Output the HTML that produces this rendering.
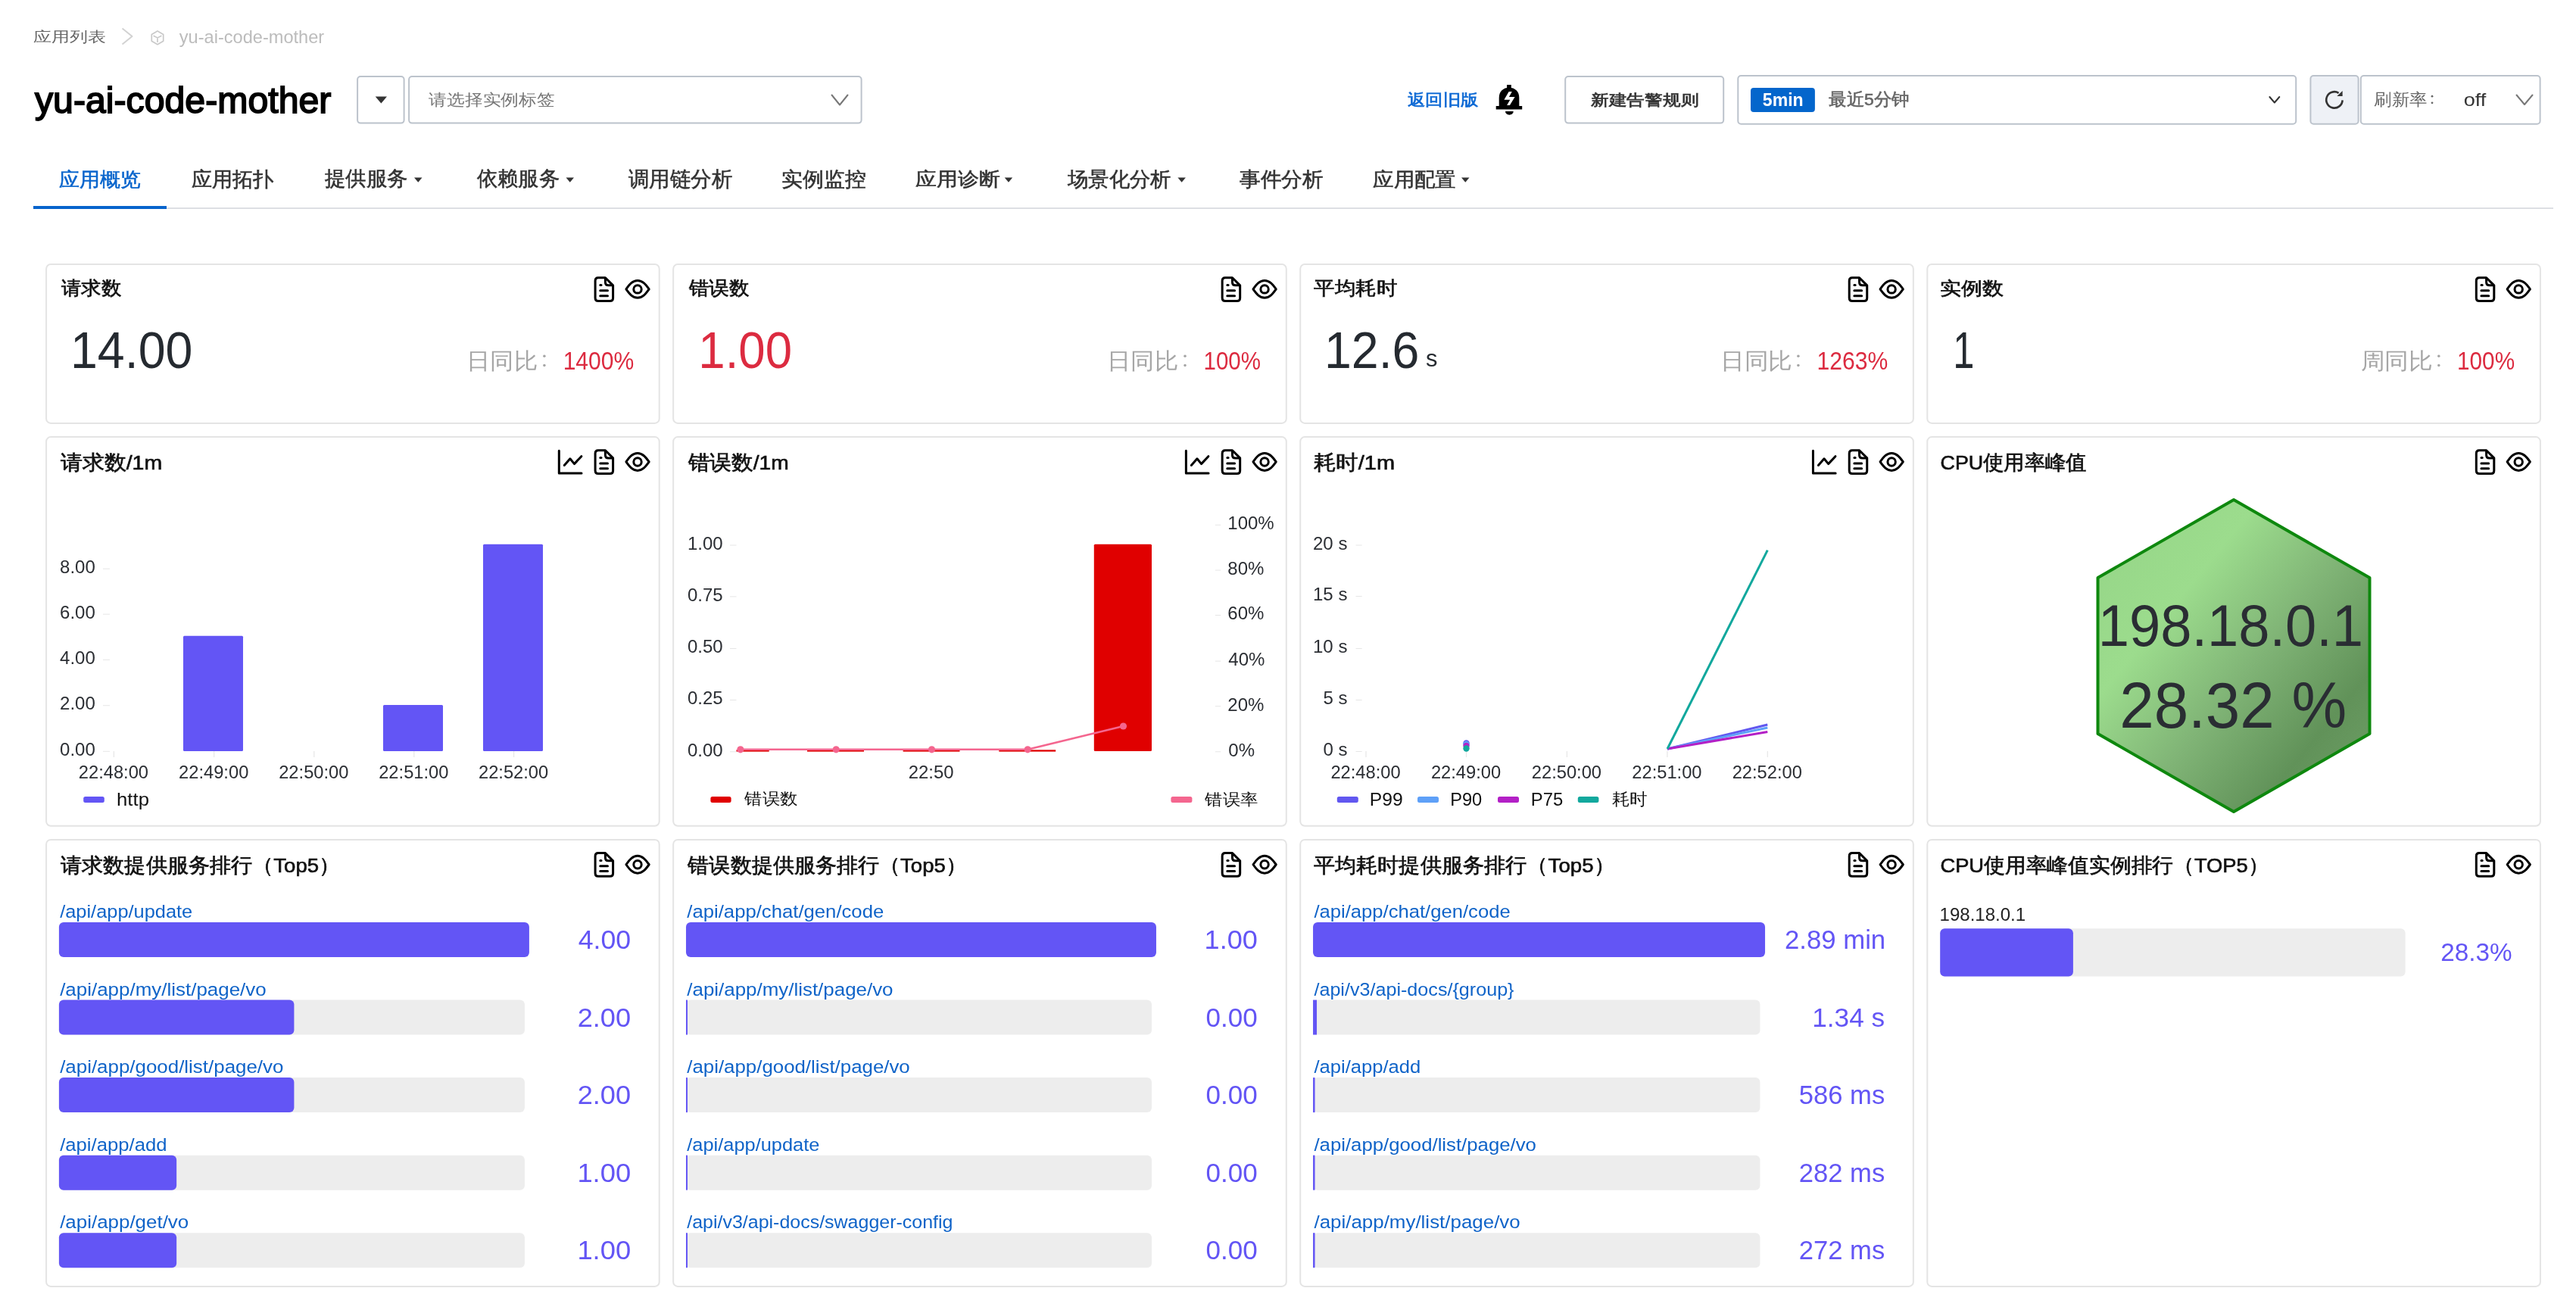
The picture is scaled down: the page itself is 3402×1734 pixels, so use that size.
<!DOCTYPE html><html><head><meta charset="utf-8"><title>yu-ai-code-mother</title><style>html,body{margin:0;padding:0;background:#fff;overflow:hidden}svg{display:block;font-family:"Liberation Sans",sans-serif;will-change:transform}</style></head><body>
<svg width="3402" height="1734" viewBox="0 0 3402 1734">
<defs><linearGradient id="hexg" gradientUnits="userSpaceOnUse" x1="2762" y1="697" x2="3110" y2="983"><stop offset="0" stop-color="#95d587"/><stop offset="0.33" stop-color="#9cdc8d"/><stop offset="0.62" stop-color="#80b476"/><stop offset="0.9" stop-color="#619259"/><stop offset="1" stop-color="#67985f"/></linearGradient></defs>
<text x="44.34" y="54.83" font-size="19.34" fill="#666" textLength="95.83" lengthAdjust="spacingAndGlyphs">应用列表</text>
<path d="M161.5,37.5 L174.5,48 L161.5,58.5" fill="none" stroke="#d2d2d2" stroke-width="2" stroke-linejoin="round"/>
<path d="M208.00,40.95 L215.71,45.40 L215.71,54.30 L208.00,58.75 L200.29,54.30 L200.29,45.40 Z" fill="none" stroke="#c9c9c9" stroke-width="1.7" stroke-linejoin="round"/>
<path d="M203.2,47.4 L208,49.9 L212.8,47.4 M208,49.9 L208,55.2" fill="none" stroke="#c9c9c9" stroke-width="1.7" stroke-linecap="round"/>
<text x="236.80" y="56.70" font-size="24.00" fill="#bcbcbc" textLength="191.40" lengthAdjust="spacingAndGlyphs">yu-ai-code-mother</text>
<text x="45.94" y="148.60" font-size="49.00" fill="#000" textLength="391.51" lengthAdjust="spacingAndGlyphs" stroke="#000" stroke-width="1.8">yu-ai-code-mother</text>
<rect x="472.10" y="101.00" width="61.50" height="61.60" fill="none" rx="4" stroke="#bcc3cc" stroke-width="2"/>
<path d="M495.7,127.6 L511,127.6 L503.35,136.5 Z" fill="#333" />
<rect x="540.10" y="101.00" width="597.50" height="61.60" fill="none" rx="4" stroke="#bcc3cc" stroke-width="2"/>
<text x="566.29" y="138.74" font-size="21.40" fill="#777" textLength="166.40" lengthAdjust="spacingAndGlyphs">请选择实例标签</text>
<path d="M1098.5,125.5 L1109,138.5 L1119.5,125.5" fill="none" stroke="#777" stroke-width="2" stroke-linecap="round" stroke-linejoin="round"/>
<text x="1859.04" y="139.05" font-size="21.32" fill="#0b68d4" textLength="93.62" lengthAdjust="spacingAndGlyphs" stroke="#0b68d4" stroke-width="0.7">返回旧版</text>
<path d="M1990.10,112.00 L1995.80,112.00 L1995.80,116.80 L1990.10,116.80 Z" fill="#000" />
<path d="M1979.70,140.20 L1979.70,129.00 C1979.70,120.50 1985.50,115.80 1993.00,115.80 C2000.50,115.80 2006.30,120.50 2006.30,129.00 L2006.30,140.20 Z" fill="#000" />
<path d="M1975.70,140.00 L2010.20,140.00 L2010.20,144.60 L1975.70,144.60 Z" fill="#000" />
<path d="M1988.00,146.90 A5.35,4.9 0 0 0 1998.70,146.90 Z" fill="#000" />
<path d="M1992.65,120.90 L1996.80,120.90 L1992.90,128.00 L2000.60,128.00 L1993.90,138.90 L1990.10,138.90 L1994.30,131.80 L1986.40,131.80 Z" fill="#fff" />
<rect x="2067.20" y="101.00" width="209.00" height="61.60" fill="none" rx="4" stroke="#bcc3cc" stroke-width="2"/>
<text x="2100.98" y="138.80" font-size="19.84" fill="#333" textLength="142.42" lengthAdjust="spacingAndGlyphs" stroke="#333" stroke-width="0.7">新建告警规则</text>
<rect x="2295.30" y="100.00" width="736.90" height="63.70" fill="none" rx="4" stroke="#bcc3cc" stroke-width="2"/>
<rect x="2312.00" y="115.90" width="84.90" height="32.10" fill="#0466cc" rx="4"/>
<text x="2327.82" y="139.50" font-size="23.50" fill="#fff" font-weight="bold" textLength="53.85" lengthAdjust="spacingAndGlyphs">5min</text>
<text x="2415.06" y="138.59" font-size="22.51" fill="#666" textLength="106.68" lengthAdjust="spacingAndGlyphs" stroke="#666" stroke-width="0.6">最近5分钟</text>
<path d="M2997.4,128 L3003.85,135.5 L3010.3,128" fill="none" stroke="#333" stroke-width="2" stroke-linecap="round" stroke-linejoin="round"/>
<rect x="3051.40" y="100.00" width="63.20" height="63.70" fill="#eef1f6" rx="4" stroke="#bcc3cc" stroke-width="2"/>
<path d="M3093.60,132.40 A10.7,10.7 0 1 1 3088.57,122.83" fill="none" stroke="#333" stroke-width="2.6" />
<path d="M3093.6,120 L3093.6,127 L3086.4,127 Z" fill="#333" />
<rect x="3117.80" y="100.00" width="236.80" height="63.70" fill="none" rx="4" stroke="#bcc3cc" stroke-width="2"/>
<text x="3135.25" y="139.31" font-size="22.25" fill="#666" textLength="70.32" lengthAdjust="spacingAndGlyphs">刷新率</text>
<circle cx="3212.00" cy="127.20" r="1.4" fill="#666"/>
<circle cx="3212.00" cy="135.80" r="1.4" fill="#666"/>
<text x="3253.69" y="139.90" font-size="24.00" fill="#333" textLength="29.60" lengthAdjust="spacingAndGlyphs">off</text>
<path d="M3323.5,125.5 L3334,138 L3344.5,125.5" fill="none" stroke="#777" stroke-width="2" stroke-linecap="round" stroke-linejoin="round"/>
<line x1="44.00" y1="275.00" x2="3372.00" y2="275.00" stroke="#dddfe3" stroke-width="2" />
<rect x="44.00" y="272.00" width="176.00" height="4.00" fill="#0764cc"/>
<text x="77.92" y="245.83" font-size="25.72" fill="#0764cc" textLength="107.89" lengthAdjust="spacingAndGlyphs" stroke="#0764cc" stroke-width="0.55">应用概览</text>
<text x="253.18" y="245.83" font-size="26.71" fill="#333" textLength="108.29" lengthAdjust="spacingAndGlyphs" stroke="#333" stroke-width="0.55">应用拓扑</text>
<text x="428.93" y="244.84" font-size="26.94" fill="#333" textLength="109.72" lengthAdjust="spacingAndGlyphs" stroke="#333" stroke-width="0.55">提供服务</text>
<path d="M547.00,234.5 L557.50,234.5 L552.25,240.8 Z" fill="#333" />
<text x="629.64" y="245.01" font-size="26.78" fill="#333" textLength="109.20" lengthAdjust="spacingAndGlyphs" stroke="#333" stroke-width="0.55">依赖服务</text>
<path d="M747.50,234.5 L758.00,234.5 L752.75,240.8 Z" fill="#333" />
<text x="829.94" y="245.83" font-size="27.74" fill="#333" textLength="137.40" lengthAdjust="spacingAndGlyphs" stroke="#333" stroke-width="0.55">调用链分析</text>
<text x="1032.19" y="245.83" font-size="26.71" fill="#333" textLength="111.65" lengthAdjust="spacingAndGlyphs" stroke="#333" stroke-width="0.55">实例监控</text>
<text x="1209.19" y="245.01" font-size="24.87" fill="#333" textLength="111.68" lengthAdjust="spacingAndGlyphs" stroke="#333" stroke-width="0.55">应用诊断</text>
<path d="M1326.70,234.5 L1337.20,234.5 L1331.95,240.8 Z" fill="#333" />
<text x="1409.86" y="245.83" font-size="26.71" fill="#333" textLength="136.69" lengthAdjust="spacingAndGlyphs" stroke="#333" stroke-width="0.55">场景化分析</text>
<path d="M1555.40,234.5 L1565.90,234.5 L1560.65,240.8 Z" fill="#333" />
<text x="1637.16" y="245.83" font-size="26.75" fill="#333" textLength="110.67" lengthAdjust="spacingAndGlyphs" stroke="#333" stroke-width="0.55">事件分析</text>
<text x="1813.19" y="245.83" font-size="25.72" fill="#333" textLength="109.62" lengthAdjust="spacingAndGlyphs" stroke="#333" stroke-width="0.55">应用配置</text>
<path d="M1930.00,234.5 L1940.50,234.5 L1935.25,240.8 Z" fill="#333" />
<rect x="61.10" y="349.05" width="809.60" height="209.85" fill="#fff" rx="6" stroke="#e4e4e4" stroke-width="2"/>
<rect x="889.17" y="349.05" width="809.60" height="209.85" fill="#fff" rx="6" stroke="#e4e4e4" stroke-width="2"/>
<rect x="1717.24" y="349.05" width="809.60" height="209.85" fill="#fff" rx="6" stroke="#e4e4e4" stroke-width="2"/>
<rect x="2545.30" y="349.05" width="809.60" height="209.85" fill="#fff" rx="6" stroke="#e4e4e4" stroke-width="2"/>
<rect x="61.10" y="577.10" width="809.60" height="513.60" fill="#fff" rx="6" stroke="#e4e4e4" stroke-width="2"/>
<rect x="889.17" y="577.10" width="809.60" height="513.60" fill="#fff" rx="6" stroke="#e4e4e4" stroke-width="2"/>
<rect x="1717.24" y="577.10" width="809.60" height="513.60" fill="#fff" rx="6" stroke="#e4e4e4" stroke-width="2"/>
<rect x="2545.30" y="577.10" width="809.60" height="513.60" fill="#fff" rx="6" stroke="#e4e4e4" stroke-width="2"/>
<rect x="61.10" y="1108.90" width="809.60" height="590.00" fill="#fff" rx="6" stroke="#e4e4e4" stroke-width="2"/>
<rect x="889.17" y="1108.90" width="809.60" height="590.00" fill="#fff" rx="6" stroke="#e4e4e4" stroke-width="2"/>
<rect x="1717.24" y="1108.90" width="809.60" height="590.00" fill="#fff" rx="6" stroke="#e4e4e4" stroke-width="2"/>
<rect x="2545.30" y="1108.90" width="809.60" height="590.00" fill="#fff" rx="6" stroke="#e4e4e4" stroke-width="2"/>
<path d="M790.10,366.75 L799.40,366.75 L809.60,376.85 L809.60,393.45 Q809.60,397.45 805.60,397.45 L790.10,397.45 Q786.10,397.45 786.10,393.45 L786.10,370.75 Q786.10,366.75 790.10,366.75 Z" fill="none" stroke="#000" stroke-width="3" stroke-linejoin="round"/>
<path d="M799.40,366.75 L799.40,372.85 Q799.40,376.85 803.40,376.85 L809.60,376.85" fill="none" stroke="#000" stroke-width="3" stroke-linejoin="round"/>
<path d="M792.80,376.55 L794.00,376.55" fill="none" stroke="#000" stroke-width="3" stroke-linecap="round"/>
<path d="M792.70,383.85 L802.50,383.85 M792.70,390.65 L802.50,390.65" fill="none" stroke="#000" stroke-width="3" stroke-linecap="round"/>
<path d="M826.90,381.90 C831.60,375.25 835.60,370.45 842.00,370.45 C848.40,370.45 852.40,375.25 857.20,381.90 C852.40,388.55 848.40,393.35 842.00,393.35 C835.60,393.35 831.60,388.55 826.90,381.90 Z" fill="none" stroke="#000" stroke-width="3" stroke-linejoin="round"/>
<circle cx="842.00" cy="381.90" r="5.2" fill="none" stroke="#000" stroke-width="3"/>
<text x="80.56" y="389.23" font-size="24.97" fill="#111" textLength="79.50" lengthAdjust="spacingAndGlyphs" stroke="#111" stroke-width="0.65">请求数</text>
<path d="M1618.17,366.75 L1627.47,366.75 L1637.67,376.85 L1637.67,393.45 Q1637.67,397.45 1633.67,397.45 L1618.17,397.45 Q1614.17,397.45 1614.17,393.45 L1614.17,370.75 Q1614.17,366.75 1618.17,366.75 Z" fill="none" stroke="#000" stroke-width="3" stroke-linejoin="round"/>
<path d="M1627.47,366.75 L1627.47,372.85 Q1627.47,376.85 1631.47,376.85 L1637.67,376.85" fill="none" stroke="#000" stroke-width="3" stroke-linejoin="round"/>
<path d="M1620.87,376.55 L1622.07,376.55" fill="none" stroke="#000" stroke-width="3" stroke-linecap="round"/>
<path d="M1620.77,383.85 L1630.57,383.85 M1620.77,390.65 L1630.57,390.65" fill="none" stroke="#000" stroke-width="3" stroke-linecap="round"/>
<path d="M1654.97,381.90 C1659.67,375.25 1663.67,370.45 1670.07,370.45 C1676.47,370.45 1680.47,375.25 1685.27,381.90 C1680.47,388.55 1676.47,393.35 1670.07,393.35 C1663.67,393.35 1659.67,388.55 1654.97,381.90 Z" fill="none" stroke="#000" stroke-width="3" stroke-linejoin="round"/>
<circle cx="1670.07" cy="381.90" r="5.2" fill="none" stroke="#000" stroke-width="3"/>
<text x="909.58" y="389.23" font-size="25.02" fill="#111" textLength="79.74" lengthAdjust="spacingAndGlyphs" stroke="#111" stroke-width="0.65">错误数</text>
<path d="M2446.24,366.75 L2455.54,366.75 L2465.74,376.85 L2465.74,393.45 Q2465.74,397.45 2461.74,397.45 L2446.24,397.45 Q2442.24,397.45 2442.24,393.45 L2442.24,370.75 Q2442.24,366.75 2446.24,366.75 Z" fill="none" stroke="#000" stroke-width="3" stroke-linejoin="round"/>
<path d="M2455.54,366.75 L2455.54,372.85 Q2455.54,376.85 2459.54,376.85 L2465.74,376.85" fill="none" stroke="#000" stroke-width="3" stroke-linejoin="round"/>
<path d="M2448.94,376.55 L2450.14,376.55" fill="none" stroke="#000" stroke-width="3" stroke-linecap="round"/>
<path d="M2448.84,383.85 L2458.64,383.85 M2448.84,390.65 L2458.64,390.65" fill="none" stroke="#000" stroke-width="3" stroke-linecap="round"/>
<path d="M2483.04,381.90 C2487.74,375.25 2491.74,370.45 2498.14,370.45 C2504.54,370.45 2508.54,375.25 2513.34,381.90 C2508.54,388.55 2504.54,393.35 2498.14,393.35 C2491.74,393.35 2487.74,388.55 2483.04,381.90 Z" fill="none" stroke="#000" stroke-width="3" stroke-linejoin="round"/>
<circle cx="2498.14" cy="381.90" r="5.2" fill="none" stroke="#000" stroke-width="3"/>
<text x="1735.21" y="389.23" font-size="24.97" fill="#111" textLength="109.77" lengthAdjust="spacingAndGlyphs" stroke="#111" stroke-width="0.65">平均耗时</text>
<path d="M3274.30,366.75 L3283.60,366.75 L3293.80,376.85 L3293.80,393.45 Q3293.80,397.45 3289.80,397.45 L3274.30,397.45 Q3270.30,397.45 3270.30,393.45 L3270.30,370.75 Q3270.30,366.75 3274.30,366.75 Z" fill="none" stroke="#000" stroke-width="3" stroke-linejoin="round"/>
<path d="M3283.60,366.75 L3283.60,372.85 Q3283.60,376.85 3287.60,376.85 L3293.80,376.85" fill="none" stroke="#000" stroke-width="3" stroke-linejoin="round"/>
<path d="M3277.00,376.55 L3278.20,376.55" fill="none" stroke="#000" stroke-width="3" stroke-linecap="round"/>
<path d="M3276.90,383.85 L3286.70,383.85 M3276.90,390.65 L3286.70,390.65" fill="none" stroke="#000" stroke-width="3" stroke-linecap="round"/>
<path d="M3311.10,381.90 C3315.80,375.25 3319.80,370.45 3326.20,370.45 C3332.60,370.45 3336.60,375.25 3341.40,381.90 C3336.60,388.55 3332.60,393.35 3326.20,393.35 C3319.80,393.35 3315.80,388.55 3311.10,381.90 Z" fill="none" stroke="#000" stroke-width="3" stroke-linejoin="round"/>
<circle cx="3326.20" cy="381.90" r="5.2" fill="none" stroke="#000" stroke-width="3"/>
<text x="2561.99" y="389.23" font-size="23.97" fill="#111" textLength="83.94" lengthAdjust="spacingAndGlyphs" stroke="#111" stroke-width="0.65">实例数</text>
<path d="M790.10,594.80 L799.40,594.80 L809.60,604.90 L809.60,621.50 Q809.60,625.50 805.60,625.50 L790.10,625.50 Q786.10,625.50 786.10,621.50 L786.10,598.80 Q786.10,594.80 790.10,594.80 Z" fill="none" stroke="#000" stroke-width="3" stroke-linejoin="round"/>
<path d="M799.40,594.80 L799.40,600.90 Q799.40,604.90 803.40,604.90 L809.60,604.90" fill="none" stroke="#000" stroke-width="3" stroke-linejoin="round"/>
<path d="M792.80,604.60 L794.00,604.60" fill="none" stroke="#000" stroke-width="3" stroke-linecap="round"/>
<path d="M792.70,611.90 L802.50,611.90 M792.70,618.70 L802.50,618.70" fill="none" stroke="#000" stroke-width="3" stroke-linecap="round"/>
<path d="M826.90,609.95 C831.60,603.30 835.60,598.50 842.00,598.50 C848.40,598.50 852.40,603.30 857.20,609.95 C852.40,616.60 848.40,621.40 842.00,621.40 C835.60,621.40 831.60,616.60 826.90,609.95 Z" fill="none" stroke="#000" stroke-width="3" stroke-linejoin="round"/>
<circle cx="842.00" cy="609.95" r="5.2" fill="none" stroke="#000" stroke-width="3"/>
<path d="M738.30,595.20 L738.30,624.90 L768.00,624.90" fill="none" stroke="#000" stroke-width="3" stroke-linecap="round" stroke-linejoin="round"/>
<path d="M745.30,614.50 L752.90,605.80 L758.50,612.60 L767.80,602.70" fill="none" stroke="#000" stroke-width="3" stroke-linecap="round" stroke-linejoin="round"/>
<text x="79.67" y="619.70" font-size="26.50" fill="#111" textLength="134.46" lengthAdjust="spacingAndGlyphs" stroke="#111" stroke-width="0.65">请求数/1m</text>
<path d="M1618.17,594.80 L1627.47,594.80 L1637.67,604.90 L1637.67,621.50 Q1637.67,625.50 1633.67,625.50 L1618.17,625.50 Q1614.17,625.50 1614.17,621.50 L1614.17,598.80 Q1614.17,594.80 1618.17,594.80 Z" fill="none" stroke="#000" stroke-width="3" stroke-linejoin="round"/>
<path d="M1627.47,594.80 L1627.47,600.90 Q1627.47,604.90 1631.47,604.90 L1637.67,604.90" fill="none" stroke="#000" stroke-width="3" stroke-linejoin="round"/>
<path d="M1620.87,604.60 L1622.07,604.60" fill="none" stroke="#000" stroke-width="3" stroke-linecap="round"/>
<path d="M1620.77,611.90 L1630.57,611.90 M1620.77,618.70 L1630.57,618.70" fill="none" stroke="#000" stroke-width="3" stroke-linecap="round"/>
<path d="M1654.97,609.95 C1659.67,603.30 1663.67,598.50 1670.07,598.50 C1676.47,598.50 1680.47,603.30 1685.27,609.95 C1680.47,616.60 1676.47,621.40 1670.07,621.40 C1663.67,621.40 1659.67,616.60 1654.97,609.95 Z" fill="none" stroke="#000" stroke-width="3" stroke-linejoin="round"/>
<circle cx="1670.07" cy="609.95" r="5.2" fill="none" stroke="#000" stroke-width="3"/>
<path d="M1566.37,595.20 L1566.37,624.90 L1596.07,624.90" fill="none" stroke="#000" stroke-width="3" stroke-linecap="round" stroke-linejoin="round"/>
<path d="M1573.37,614.50 L1580.97,605.80 L1586.57,612.60 L1595.87,602.70" fill="none" stroke="#000" stroke-width="3" stroke-linecap="round" stroke-linejoin="round"/>
<text x="908.67" y="619.70" font-size="26.50" fill="#111" textLength="133.07" lengthAdjust="spacingAndGlyphs" stroke="#111" stroke-width="0.65">错误数/1m</text>
<path d="M2446.24,594.80 L2455.54,594.80 L2465.74,604.90 L2465.74,621.50 Q2465.74,625.50 2461.74,625.50 L2446.24,625.50 Q2442.24,625.50 2442.24,621.50 L2442.24,598.80 Q2442.24,594.80 2446.24,594.80 Z" fill="none" stroke="#000" stroke-width="3" stroke-linejoin="round"/>
<path d="M2455.54,594.80 L2455.54,600.90 Q2455.54,604.90 2459.54,604.90 L2465.74,604.90" fill="none" stroke="#000" stroke-width="3" stroke-linejoin="round"/>
<path d="M2448.94,604.60 L2450.14,604.60" fill="none" stroke="#000" stroke-width="3" stroke-linecap="round"/>
<path d="M2448.84,611.90 L2458.64,611.90 M2448.84,618.70 L2458.64,618.70" fill="none" stroke="#000" stroke-width="3" stroke-linecap="round"/>
<path d="M2483.04,609.95 C2487.74,603.30 2491.74,598.50 2498.14,598.50 C2504.54,598.50 2508.54,603.30 2513.34,609.95 C2508.54,616.60 2504.54,621.40 2498.14,621.40 C2491.74,621.40 2487.74,616.60 2483.04,609.95 Z" fill="none" stroke="#000" stroke-width="3" stroke-linejoin="round"/>
<circle cx="2498.14" cy="609.95" r="5.2" fill="none" stroke="#000" stroke-width="3"/>
<path d="M2394.44,595.20 L2394.44,624.90 L2424.14,624.90" fill="none" stroke="#000" stroke-width="3" stroke-linecap="round" stroke-linejoin="round"/>
<path d="M2401.44,614.50 L2409.04,605.80 L2414.64,612.60 L2423.94,602.70" fill="none" stroke="#000" stroke-width="3" stroke-linecap="round" stroke-linejoin="round"/>
<text x="1734.66" y="619.70" font-size="26.50" fill="#111" textLength="107.38" lengthAdjust="spacingAndGlyphs" stroke="#111" stroke-width="0.65">耗时/1m</text>
<path d="M3274.30,594.80 L3283.60,594.80 L3293.80,604.90 L3293.80,621.50 Q3293.80,625.50 3289.80,625.50 L3274.30,625.50 Q3270.30,625.50 3270.30,621.50 L3270.30,598.80 Q3270.30,594.80 3274.30,594.80 Z" fill="none" stroke="#000" stroke-width="3" stroke-linejoin="round"/>
<path d="M3283.60,594.80 L3283.60,600.90 Q3283.60,604.90 3287.60,604.90 L3293.80,604.90" fill="none" stroke="#000" stroke-width="3" stroke-linejoin="round"/>
<path d="M3277.00,604.60 L3278.20,604.60" fill="none" stroke="#000" stroke-width="3" stroke-linecap="round"/>
<path d="M3276.90,611.90 L3286.70,611.90 M3276.90,618.70 L3286.70,618.70" fill="none" stroke="#000" stroke-width="3" stroke-linecap="round"/>
<path d="M3311.10,609.95 C3315.80,603.30 3319.80,598.50 3326.20,598.50 C3332.60,598.50 3336.60,603.30 3341.40,609.95 C3336.60,616.60 3332.60,621.40 3326.20,621.40 C3319.80,621.40 3315.80,616.60 3311.10,609.95 Z" fill="none" stroke="#000" stroke-width="3" stroke-linejoin="round"/>
<circle cx="3326.20" cy="609.95" r="5.2" fill="none" stroke="#000" stroke-width="3"/>
<text x="2562.58" y="619.70" font-size="26.50" fill="#111" textLength="193.16" lengthAdjust="spacingAndGlyphs" stroke="#111" stroke-width="0.65">CPU使用率峰值</text>
<path d="M790.10,1126.60 L799.40,1126.60 L809.60,1136.70 L809.60,1153.30 Q809.60,1157.30 805.60,1157.30 L790.10,1157.30 Q786.10,1157.30 786.10,1153.30 L786.10,1130.60 Q786.10,1126.60 790.10,1126.60 Z" fill="none" stroke="#000" stroke-width="3" stroke-linejoin="round"/>
<path d="M799.40,1126.60 L799.40,1132.70 Q799.40,1136.70 803.40,1136.70 L809.60,1136.70" fill="none" stroke="#000" stroke-width="3" stroke-linejoin="round"/>
<path d="M792.80,1136.40 L794.00,1136.40" fill="none" stroke="#000" stroke-width="3" stroke-linecap="round"/>
<path d="M792.70,1143.70 L802.50,1143.70 M792.70,1150.50 L802.50,1150.50" fill="none" stroke="#000" stroke-width="3" stroke-linecap="round"/>
<path d="M826.90,1141.75 C831.60,1135.10 835.60,1130.30 842.00,1130.30 C848.40,1130.30 852.40,1135.10 857.20,1141.75 C852.40,1148.40 848.40,1153.20 842.00,1153.20 C835.60,1153.20 831.60,1148.40 826.90,1141.75 Z" fill="none" stroke="#000" stroke-width="3" stroke-linejoin="round"/>
<circle cx="842.00" cy="1141.75" r="5.2" fill="none" stroke="#000" stroke-width="3"/>
<text x="80.11" y="1151.50" font-size="26.50" fill="#111" textLength="369.16" lengthAdjust="spacingAndGlyphs" stroke="#111" stroke-width="0.65">请求数提供服务排行（Top5）</text>
<path d="M1618.17,1126.60 L1627.47,1126.60 L1637.67,1136.70 L1637.67,1153.30 Q1637.67,1157.30 1633.67,1157.30 L1618.17,1157.30 Q1614.17,1157.30 1614.17,1153.30 L1614.17,1130.60 Q1614.17,1126.60 1618.17,1126.60 Z" fill="none" stroke="#000" stroke-width="3" stroke-linejoin="round"/>
<path d="M1627.47,1126.60 L1627.47,1132.70 Q1627.47,1136.70 1631.47,1136.70 L1637.67,1136.70" fill="none" stroke="#000" stroke-width="3" stroke-linejoin="round"/>
<path d="M1620.87,1136.40 L1622.07,1136.40" fill="none" stroke="#000" stroke-width="3" stroke-linecap="round"/>
<path d="M1620.77,1143.70 L1630.57,1143.70 M1620.77,1150.50 L1630.57,1150.50" fill="none" stroke="#000" stroke-width="3" stroke-linecap="round"/>
<path d="M1654.97,1141.75 C1659.67,1135.10 1663.67,1130.30 1670.07,1130.30 C1676.47,1130.30 1680.47,1135.10 1685.27,1141.75 C1680.47,1148.40 1676.47,1153.20 1670.07,1153.20 C1663.67,1153.20 1659.67,1148.40 1654.97,1141.75 Z" fill="none" stroke="#000" stroke-width="3" stroke-linejoin="round"/>
<circle cx="1670.07" cy="1141.75" r="5.2" fill="none" stroke="#000" stroke-width="3"/>
<text x="908.42" y="1151.50" font-size="26.50" fill="#111" textLength="368.47" lengthAdjust="spacingAndGlyphs" stroke="#111" stroke-width="0.65">错误数提供服务排行（Top5）</text>
<path d="M2446.24,1126.60 L2455.54,1126.60 L2465.74,1136.70 L2465.74,1153.30 Q2465.74,1157.30 2461.74,1157.30 L2446.24,1157.30 Q2442.24,1157.30 2442.24,1153.30 L2442.24,1130.60 Q2442.24,1126.60 2446.24,1126.60 Z" fill="none" stroke="#000" stroke-width="3" stroke-linejoin="round"/>
<path d="M2455.54,1126.60 L2455.54,1132.70 Q2455.54,1136.70 2459.54,1136.70 L2465.74,1136.70" fill="none" stroke="#000" stroke-width="3" stroke-linejoin="round"/>
<path d="M2448.94,1136.40 L2450.14,1136.40" fill="none" stroke="#000" stroke-width="3" stroke-linecap="round"/>
<path d="M2448.84,1143.70 L2458.64,1143.70 M2448.84,1150.50 L2458.64,1150.50" fill="none" stroke="#000" stroke-width="3" stroke-linecap="round"/>
<path d="M2483.04,1141.75 C2487.74,1135.10 2491.74,1130.30 2498.14,1130.30 C2504.54,1130.30 2508.54,1135.10 2513.34,1141.75 C2508.54,1148.40 2504.54,1153.20 2498.14,1153.20 C2491.74,1153.20 2487.74,1148.40 2483.04,1141.75 Z" fill="none" stroke="#000" stroke-width="3" stroke-linejoin="round"/>
<circle cx="2498.14" cy="1141.75" r="5.2" fill="none" stroke="#000" stroke-width="3"/>
<text x="1734.86" y="1151.50" font-size="26.50" fill="#111" textLength="397.82" lengthAdjust="spacingAndGlyphs" stroke="#111" stroke-width="0.65">平均耗时提供服务排行（Top5）</text>
<path d="M3274.30,1126.60 L3283.60,1126.60 L3293.80,1136.70 L3293.80,1153.30 Q3293.80,1157.30 3289.80,1157.30 L3274.30,1157.30 Q3270.30,1157.30 3270.30,1153.30 L3270.30,1130.60 Q3270.30,1126.60 3274.30,1126.60 Z" fill="none" stroke="#000" stroke-width="3" stroke-linejoin="round"/>
<path d="M3283.60,1126.60 L3283.60,1132.70 Q3283.60,1136.70 3287.60,1136.70 L3293.80,1136.70" fill="none" stroke="#000" stroke-width="3" stroke-linejoin="round"/>
<path d="M3277.00,1136.40 L3278.20,1136.40" fill="none" stroke="#000" stroke-width="3" stroke-linecap="round"/>
<path d="M3276.90,1143.70 L3286.70,1143.70 M3276.90,1150.50 L3286.70,1150.50" fill="none" stroke="#000" stroke-width="3" stroke-linecap="round"/>
<path d="M3311.10,1141.75 C3315.80,1135.10 3319.80,1130.30 3326.20,1130.30 C3332.60,1130.30 3336.60,1135.10 3341.40,1141.75 C3336.60,1148.40 3332.60,1153.20 3326.20,1153.20 C3319.80,1153.20 3315.80,1148.40 3311.10,1141.75 Z" fill="none" stroke="#000" stroke-width="3" stroke-linejoin="round"/>
<circle cx="3326.20" cy="1141.75" r="5.2" fill="none" stroke="#000" stroke-width="3"/>
<text x="2562.45" y="1151.50" font-size="26.50" fill="#111" textLength="434.01" lengthAdjust="spacingAndGlyphs" stroke="#111" stroke-width="0.65">CPU使用率峰值实例排行（TOP5）</text>
<text x="92.98" y="486.30" font-size="68.00" fill="#252a30" textLength="161.42" lengthAdjust="spacingAndGlyphs">14.00</text>
<text x="615.87" y="487.19" font-size="30.28" fill="#a6a6a6" textLength="93.97" lengthAdjust="spacingAndGlyphs">日同比</text>
<circle cx="718.90" cy="470.35" r="1.75" fill="#a6a6a6"/>
<circle cx="718.90" cy="482.45" r="1.75" fill="#a6a6a6"/>
<text x="743.64" y="488.20" font-size="33.00" fill="#dc2b40" textLength="93.73" lengthAdjust="spacingAndGlyphs">1400%</text>
<text x="922.29" y="486.30" font-size="68.00" fill="#dc2b40" textLength="123.73" lengthAdjust="spacingAndGlyphs">1.00</text>
<text x="1461.88" y="487.23" font-size="29.99" fill="#a6a6a6" textLength="93.95" lengthAdjust="spacingAndGlyphs">日同比</text>
<circle cx="1565.00" cy="470.35" r="1.75" fill="#a6a6a6"/>
<circle cx="1565.00" cy="482.45" r="1.75" fill="#a6a6a6"/>
<text x="1589.54" y="488.20" font-size="33.00" fill="#dc2b40" textLength="75.42" lengthAdjust="spacingAndGlyphs">100%</text>
<text x="1748.98" y="486.30" font-size="68.00" fill="#252a30" textLength="125.42" lengthAdjust="spacingAndGlyphs">12.6</text>
<text x="1882.97" y="484.30" font-size="32.00" fill="#252a30" textLength="15.44" lengthAdjust="spacingAndGlyphs">s</text>
<text x="2271.81" y="487.19" font-size="30.28" fill="#a6a6a6" textLength="95.24" lengthAdjust="spacingAndGlyphs">日同比</text>
<circle cx="2374.90" cy="470.35" r="1.75" fill="#a6a6a6"/>
<circle cx="2374.90" cy="482.45" r="1.75" fill="#a6a6a6"/>
<text x="2399.44" y="488.20" font-size="33.00" fill="#dc2b40" textLength="93.82" lengthAdjust="spacingAndGlyphs">1263%</text>
<text x="2579.14" y="486.30" font-size="68.00" fill="#252a30" textLength="28.16" lengthAdjust="spacingAndGlyphs">1</text>
<text x="3117.62" y="487.23" font-size="29.99" fill="#a6a6a6" textLength="95.24" lengthAdjust="spacingAndGlyphs">周同比</text>
<circle cx="3220.80" cy="470.35" r="1.75" fill="#a6a6a6"/>
<circle cx="3220.80" cy="482.45" r="1.75" fill="#a6a6a6"/>
<text x="3245.05" y="488.20" font-size="33.00" fill="#dc2b40" textLength="76.02" lengthAdjust="spacingAndGlyphs">100%</text>
<text x="125.80" y="756.70" font-size="24.00" fill="#2b2e33" text-anchor="end">8.00</text>
<line x1="136.00" y1="751.20" x2="145.00" y2="751.20" stroke="#e6e6e6" stroke-width="1" />
<text x="125.80" y="816.70" font-size="24.00" fill="#2b2e33" text-anchor="end">6.00</text>
<line x1="136.00" y1="811.20" x2="145.00" y2="811.20" stroke="#e6e6e6" stroke-width="1" />
<text x="125.80" y="876.90" font-size="24.00" fill="#2b2e33" text-anchor="end">4.00</text>
<line x1="136.00" y1="871.40" x2="145.00" y2="871.40" stroke="#e6e6e6" stroke-width="1" />
<text x="125.80" y="937.30" font-size="24.00" fill="#2b2e33" text-anchor="end">2.00</text>
<line x1="136.00" y1="931.80" x2="145.00" y2="931.80" stroke="#e6e6e6" stroke-width="1" />
<text x="125.80" y="997.80" font-size="24.00" fill="#2b2e33" text-anchor="end">0.00</text>
<line x1="136.00" y1="992.30" x2="145.00" y2="992.30" stroke="#e6e6e6" stroke-width="1" />
<line x1="150.40" y1="992.00" x2="150.40" y2="1000.00" stroke="#e6e6e6" stroke-width="1.2" />
<text x="103.79" y="1028.10" font-size="24.00" fill="#2b2e33" textLength="92.23" lengthAdjust="spacingAndGlyphs">22:48:00</text>
<line x1="282.70" y1="992.00" x2="282.70" y2="1000.00" stroke="#e6e6e6" stroke-width="1.2" />
<text x="236.07" y="1028.10" font-size="24.00" fill="#2b2e33" textLength="92.25" lengthAdjust="spacingAndGlyphs">22:49:00</text>
<line x1="414.80" y1="992.00" x2="414.80" y2="1000.00" stroke="#e6e6e6" stroke-width="1.2" />
<text x="368.19" y="1028.10" font-size="24.00" fill="#2b2e33" textLength="92.23" lengthAdjust="spacingAndGlyphs">22:50:00</text>
<line x1="546.80" y1="992.00" x2="546.80" y2="1000.00" stroke="#e6e6e6" stroke-width="1.2" />
<text x="500.19" y="1028.10" font-size="24.00" fill="#2b2e33" textLength="92.23" lengthAdjust="spacingAndGlyphs">22:51:00</text>
<line x1="678.60" y1="992.00" x2="678.60" y2="1000.00" stroke="#e6e6e6" stroke-width="1.2" />
<text x="631.99" y="1028.10" font-size="24.00" fill="#2b2e33" textLength="92.24" lengthAdjust="spacingAndGlyphs">22:52:00</text>
<rect x="242.00" y="839.70" width="79.00" height="152.30" fill="#6355f5" rx="1.5"/>
<rect x="506.00" y="931.00" width="79.00" height="61.00" fill="#6355f5" rx="1.5"/>
<rect x="638.00" y="718.80" width="79.00" height="273.20" fill="#6355f5" rx="1.5"/>
<rect x="110.20" y="1052.00" width="27.60" height="8.00" fill="#6355f5" rx="2.5"/>
<text x="154.08" y="1063.50" font-size="24.00" fill="#111" textLength="42.86" lengthAdjust="spacingAndGlyphs">http</text>
<text x="954.60" y="725.80" font-size="24.00" fill="#2b2e33" text-anchor="end">1.00</text>
<line x1="964.00" y1="720.00" x2="972.50" y2="720.00" stroke="#e6e6e6" stroke-width="1" />
<text x="954.60" y="793.70" font-size="24.00" fill="#2b2e33" text-anchor="end">0.75</text>
<line x1="964.00" y1="787.90" x2="972.50" y2="787.90" stroke="#e6e6e6" stroke-width="1" />
<text x="954.60" y="862.30" font-size="24.00" fill="#2b2e33" text-anchor="end">0.50</text>
<line x1="964.00" y1="856.50" x2="972.50" y2="856.50" stroke="#e6e6e6" stroke-width="1" />
<text x="954.60" y="930.30" font-size="24.00" fill="#2b2e33" text-anchor="end">0.25</text>
<line x1="964.00" y1="924.50" x2="972.50" y2="924.50" stroke="#e6e6e6" stroke-width="1" />
<text x="954.60" y="998.60" font-size="24.00" fill="#2b2e33" text-anchor="end">0.00</text>
<line x1="964.00" y1="992.80" x2="972.50" y2="992.80" stroke="#e6e6e6" stroke-width="1" />
<text x="1621.30" y="699.10" font-size="24.00" fill="#2b2e33">100%</text>
<line x1="1604.80" y1="693.30" x2="1612.20" y2="693.30" stroke="#e6e6e6" stroke-width="1" />
<text x="1621.30" y="758.80" font-size="24.00" fill="#2b2e33">80%</text>
<line x1="1604.80" y1="753.00" x2="1612.20" y2="753.00" stroke="#e6e6e6" stroke-width="1" />
<text x="1621.30" y="818.30" font-size="24.00" fill="#2b2e33">60%</text>
<line x1="1604.80" y1="812.50" x2="1612.20" y2="812.50" stroke="#e6e6e6" stroke-width="1" />
<text x="1622.30" y="878.90" font-size="24.00" fill="#2b2e33">40%</text>
<line x1="1604.80" y1="873.10" x2="1612.20" y2="873.10" stroke="#e6e6e6" stroke-width="1" />
<text x="1621.30" y="938.50" font-size="24.00" fill="#2b2e33">20%</text>
<line x1="1604.80" y1="932.70" x2="1612.20" y2="932.70" stroke="#e6e6e6" stroke-width="1" />
<text x="1622.30" y="998.60" font-size="24.00" fill="#2b2e33">0%</text>
<line x1="1604.80" y1="992.80" x2="1612.20" y2="992.80" stroke="#e6e6e6" stroke-width="1" />
<rect x="1444.80" y="718.80" width="76.20" height="273.20" fill="#e00000" rx="1.5"/>
<rect x="972.50" y="990.30" width="43.20" height="2.30" fill="#e00000"/>
<rect x="1066.00" y="990.30" width="75.00" height="2.30" fill="#e00000"/>
<rect x="1192.60" y="990.30" width="74.90" height="2.30" fill="#e00000"/>
<rect x="1319.30" y="990.30" width="74.90" height="2.30" fill="#e00000"/>
<path d="M977.9,989.8 L1104.2,989.8 L1230.5,989.8 L1357.2,989.8 L1483.5,959" fill="none" stroke="#f4668f" stroke-width="2.6" stroke-linejoin="round"/>
<circle cx="977.90" cy="989.80" r="4.6" fill="#f4668f"/>
<circle cx="1104.20" cy="989.80" r="4.6" fill="#f4668f"/>
<circle cx="1230.50" cy="989.80" r="4.6" fill="#f4668f"/>
<circle cx="1357.20" cy="989.80" r="4.6" fill="#f4668f"/>
<circle cx="1483.50" cy="959.00" r="4.6" fill="#f4668f"/>
<text x="1199.78" y="1028.10" font-size="24.00" fill="#2b2e33" textLength="59.78" lengthAdjust="spacingAndGlyphs">22:50</text>
<rect x="938.40" y="1052.00" width="27.20" height="8.00" fill="#e00000" rx="2.5"/>
<text x="983.11" y="1062.11" font-size="21.08" fill="#111" textLength="70.39" lengthAdjust="spacingAndGlyphs">错误数</text>
<rect x="1546.40" y="1052.00" width="28.00" height="8.00" fill="#f4668f" rx="2.5"/>
<text x="1591.09" y="1062.79" font-size="21.44" fill="#111" textLength="70.32" lengthAdjust="spacingAndGlyphs">错误率</text>
<text x="1779.40" y="725.80" font-size="24.00" fill="#2b2e33" text-anchor="end">20 s</text>
<line x1="1790.50" y1="720.00" x2="1798.70" y2="720.00" stroke="#e6e6e6" stroke-width="1" />
<text x="1779.40" y="793.30" font-size="24.00" fill="#2b2e33" text-anchor="end">15 s</text>
<line x1="1790.50" y1="787.50" x2="1798.70" y2="787.50" stroke="#e6e6e6" stroke-width="1" />
<text x="1779.40" y="862.30" font-size="24.00" fill="#2b2e33" text-anchor="end">10 s</text>
<line x1="1790.50" y1="856.50" x2="1798.70" y2="856.50" stroke="#e6e6e6" stroke-width="1" />
<text x="1779.40" y="930.30" font-size="24.00" fill="#2b2e33" text-anchor="end">5 s</text>
<line x1="1790.50" y1="924.50" x2="1798.70" y2="924.50" stroke="#e6e6e6" stroke-width="1" />
<text x="1779.40" y="998.30" font-size="24.00" fill="#2b2e33" text-anchor="end">0 s</text>
<line x1="1790.50" y1="992.50" x2="1798.70" y2="992.50" stroke="#e6e6e6" stroke-width="1" />
<line x1="1804.00" y1="992.00" x2="1804.00" y2="1000.00" stroke="#e6e6e6" stroke-width="1.2" />
<text x="1757.38" y="1028.10" font-size="24.00" fill="#2b2e33" textLength="92.25" lengthAdjust="spacingAndGlyphs">22:48:00</text>
<line x1="1936.50" y1="992.00" x2="1936.50" y2="1000.00" stroke="#e6e6e6" stroke-width="1.2" />
<text x="1889.90" y="1028.10" font-size="24.00" fill="#2b2e33" textLength="92.20" lengthAdjust="spacingAndGlyphs">22:49:00</text>
<line x1="2069.40" y1="992.00" x2="2069.40" y2="1000.00" stroke="#e6e6e6" stroke-width="1.2" />
<text x="2022.79" y="1028.10" font-size="24.00" fill="#2b2e33" textLength="92.23" lengthAdjust="spacingAndGlyphs">22:50:00</text>
<line x1="2201.90" y1="992.00" x2="2201.90" y2="1000.00" stroke="#e6e6e6" stroke-width="1.2" />
<text x="2155.28" y="1028.10" font-size="24.00" fill="#2b2e33" textLength="92.25" lengthAdjust="spacingAndGlyphs">22:51:00</text>
<line x1="2334.30" y1="992.00" x2="2334.30" y2="1000.00" stroke="#e6e6e6" stroke-width="1.2" />
<text x="2287.69" y="1028.10" font-size="24.00" fill="#2b2e33" textLength="92.22" lengthAdjust="spacingAndGlyphs">22:52:00</text>
<path d="M2202,989 L2334.3,957" fill="none" stroke="#6157f0" stroke-width="3" />
<path d="M2202,989 L2334.3,961" fill="none" stroke="#5ea0f8" stroke-width="3" />
<path d="M2202,989 L2334.3,966.5" fill="none" stroke="#b320c6" stroke-width="3" />
<path d="M2202,989 L2334.3,726.6" fill="none" stroke="#12a89d" stroke-width="3" />
<circle cx="1936.50" cy="981.50" r="4.2" fill="#6157f0"/>
<circle cx="1936.50" cy="983.00" r="4.2" fill="#5ea0f8"/>
<circle cx="1936.50" cy="985.00" r="4.2" fill="#b320c6"/>
<circle cx="1936.50" cy="988.50" r="4.2" fill="#12a89d"/>
<rect x="1765.80" y="1052.00" width="28.00" height="8.00" fill="#6157f0" rx="2.5"/>
<text x="1808.78" y="1063.50" font-size="24.00" fill="#111" textLength="43.89" lengthAdjust="spacingAndGlyphs">P99</text>
<rect x="1872.00" y="1052.00" width="28.00" height="8.00" fill="#5ea0f8" rx="2.5"/>
<text x="1915.17" y="1063.50" font-size="24.00" fill="#111" textLength="42.06" lengthAdjust="spacingAndGlyphs">P90</text>
<rect x="1978.00" y="1052.00" width="28.00" height="8.00" fill="#b320c6" rx="2.5"/>
<text x="2021.80" y="1063.50" font-size="24.00" fill="#111" textLength="42.42" lengthAdjust="spacingAndGlyphs">P75</text>
<rect x="2083.80" y="1052.00" width="27.60" height="8.00" fill="#12a89d" rx="2.5"/>
<text x="2128.86" y="1063.08" font-size="22.08" fill="#111" textLength="46.94" lengthAdjust="spacingAndGlyphs">耗时</text>
<path d="M2950.00,660.00 L3129.50,763.00 L3129.50,969.00 L2950.00,1072.00 L2770.50,969.00 L2770.50,763.00 Z" fill="url(#hexg)" stroke="#0e880e" stroke-width="4" stroke-linejoin="round"/>
<text x="2770.74" y="852.90" font-size="77.00" fill="#2a2d33" textLength="350.32" lengthAdjust="spacingAndGlyphs">198.18.0.1</text>
<text x="2799.22" y="961.00" font-size="86.00" fill="#2a2d33" textLength="299.87" lengthAdjust="spacingAndGlyphs">28.32 %</text>
<text x="79.16" y="1212.20" font-size="24.50" fill="#0f63c8" textLength="175.07" lengthAdjust="spacingAndGlyphs">/api/app/update</text>
<rect x="77.90" y="1218.00" width="621.00" height="46.00" fill="#6355f5" rx="6"/>
<text x="763.70" y="1253.00" font-size="35.50" fill="#6355f5" textLength="69.38" lengthAdjust="spacingAndGlyphs">4.00</text>
<text x="79.17" y="1314.75" font-size="24.50" fill="#0f63c8" textLength="272.57" lengthAdjust="spacingAndGlyphs">/api/app/my/list/page/vo</text>
<rect x="77.90" y="1320.55" width="615.00" height="46.00" fill="#ededed" rx="6"/>
<rect x="77.90" y="1320.55" width="310.50" height="46.00" fill="#6355f5" rx="6"/>
<text x="762.70" y="1355.55" font-size="35.50" fill="#6355f5" textLength="70.40" lengthAdjust="spacingAndGlyphs">2.00</text>
<text x="79.17" y="1417.30" font-size="24.50" fill="#0f63c8" textLength="295.26" lengthAdjust="spacingAndGlyphs">/api/app/good/list/page/vo</text>
<rect x="77.90" y="1423.10" width="615.00" height="46.00" fill="#ededed" rx="6"/>
<rect x="77.90" y="1423.10" width="310.50" height="46.00" fill="#6355f5" rx="6"/>
<text x="762.70" y="1458.10" font-size="35.50" fill="#6355f5" textLength="70.40" lengthAdjust="spacingAndGlyphs">2.00</text>
<text x="79.16" y="1519.85" font-size="24.50" fill="#0f63c8" textLength="141.38" lengthAdjust="spacingAndGlyphs">/api/app/add</text>
<rect x="77.90" y="1525.65" width="615.00" height="46.00" fill="#ededed" rx="6"/>
<rect x="77.90" y="1525.65" width="155.25" height="46.00" fill="#6355f5" rx="6"/>
<text x="762.40" y="1560.65" font-size="35.50" fill="#6355f5" textLength="70.71" lengthAdjust="spacingAndGlyphs">1.00</text>
<text x="79.16" y="1622.40" font-size="24.50" fill="#0f63c8" textLength="170.07" lengthAdjust="spacingAndGlyphs">/api/app/get/vo</text>
<rect x="77.90" y="1628.20" width="615.00" height="46.00" fill="#ededed" rx="6"/>
<rect x="77.90" y="1628.20" width="155.25" height="46.00" fill="#6355f5" rx="6"/>
<text x="762.40" y="1663.20" font-size="35.50" fill="#6355f5" textLength="70.71" lengthAdjust="spacingAndGlyphs">1.00</text>
<text x="907.31" y="1212.20" font-size="24.50" fill="#0f63c8" textLength="259.93" lengthAdjust="spacingAndGlyphs">/api/app/chat/gen/code</text>
<rect x="905.97" y="1218.00" width="621.00" height="46.00" fill="#6355f5" rx="6"/>
<text x="1590.59" y="1253.00" font-size="35.50" fill="#6355f5" textLength="70.19" lengthAdjust="spacingAndGlyphs">1.00</text>
<text x="907.30" y="1314.75" font-size="24.50" fill="#0f63c8" textLength="272.23" lengthAdjust="spacingAndGlyphs">/api/app/my/list/page/vo</text>
<rect x="905.97" y="1320.55" width="615.00" height="46.00" fill="#ededed" rx="6"/>
<rect x="905.97" y="1320.55" width="2.00" height="46.00" fill="#6355f5"/>
<text x="1592.62" y="1355.55" font-size="35.50" fill="#6355f5" textLength="68.15" lengthAdjust="spacingAndGlyphs">0.00</text>
<text x="907.31" y="1417.30" font-size="24.50" fill="#0f63c8" textLength="294.43" lengthAdjust="spacingAndGlyphs">/api/app/good/list/page/vo</text>
<rect x="905.97" y="1423.10" width="615.00" height="46.00" fill="#ededed" rx="6"/>
<rect x="905.97" y="1423.10" width="2.00" height="46.00" fill="#6355f5"/>
<text x="1592.62" y="1458.10" font-size="35.50" fill="#6355f5" textLength="68.15" lengthAdjust="spacingAndGlyphs">0.00</text>
<text x="907.30" y="1519.85" font-size="24.50" fill="#0f63c8" textLength="175.14" lengthAdjust="spacingAndGlyphs">/api/app/update</text>
<rect x="905.97" y="1525.65" width="615.00" height="46.00" fill="#ededed" rx="6"/>
<rect x="905.97" y="1525.65" width="2.00" height="46.00" fill="#6355f5"/>
<text x="1592.62" y="1560.65" font-size="35.50" fill="#6355f5" textLength="68.15" lengthAdjust="spacingAndGlyphs">0.00</text>
<text x="907.31" y="1622.40" font-size="24.50" fill="#0f63c8" textLength="351.12" lengthAdjust="spacingAndGlyphs">/api/v3/api-docs/swagger-config</text>
<rect x="905.97" y="1628.20" width="615.00" height="46.00" fill="#ededed" rx="6"/>
<rect x="905.97" y="1628.20" width="2.00" height="46.00" fill="#6355f5"/>
<text x="1592.62" y="1663.20" font-size="35.50" fill="#6355f5" textLength="68.15" lengthAdjust="spacingAndGlyphs">0.00</text>
<text x="1735.45" y="1212.20" font-size="24.50" fill="#0f63c8" textLength="259.19" lengthAdjust="spacingAndGlyphs">/api/app/chat/gen/code</text>
<rect x="1734.04" y="1218.00" width="597.00" height="46.00" fill="#6355f5" rx="6"/>
<text x="2356.91" y="1253.00" font-size="35.50" fill="#6355f5" textLength="133.29" lengthAdjust="spacingAndGlyphs">2.89 min</text>
<text x="1735.45" y="1314.75" font-size="24.50" fill="#0f63c8" textLength="264.08" lengthAdjust="spacingAndGlyphs">/api/v3/api-docs/{group}</text>
<rect x="1734.04" y="1320.55" width="590.40" height="46.00" fill="#ededed" rx="6"/>
<rect x="1734.04" y="1320.55" width="5.00" height="46.00" fill="#6355f5"/>
<text x="2393.22" y="1355.55" font-size="35.50" fill="#6355f5" textLength="95.98" lengthAdjust="spacingAndGlyphs">1.34 s</text>
<text x="1735.44" y="1417.30" font-size="24.50" fill="#0f63c8" textLength="140.89" lengthAdjust="spacingAndGlyphs">/api/app/add</text>
<rect x="1734.04" y="1423.10" width="590.40" height="46.00" fill="#ededed" rx="6"/>
<rect x="1734.04" y="1423.10" width="2.50" height="46.00" fill="#6355f5"/>
<text x="2375.71" y="1458.10" font-size="35.50" fill="#6355f5" textLength="113.48" lengthAdjust="spacingAndGlyphs">586 ms</text>
<text x="1735.45" y="1519.85" font-size="24.50" fill="#0f63c8" textLength="293.48" lengthAdjust="spacingAndGlyphs">/api/app/good/list/page/vo</text>
<rect x="1734.04" y="1525.65" width="590.40" height="46.00" fill="#ededed" rx="6"/>
<rect x="1734.04" y="1525.65" width="2.50" height="46.00" fill="#6355f5"/>
<text x="2375.71" y="1560.65" font-size="35.50" fill="#6355f5" textLength="113.48" lengthAdjust="spacingAndGlyphs">282 ms</text>
<text x="1735.45" y="1622.40" font-size="24.50" fill="#0f63c8" textLength="272.29" lengthAdjust="spacingAndGlyphs">/api/app/my/list/page/vo</text>
<rect x="1734.04" y="1628.20" width="590.40" height="46.00" fill="#ededed" rx="6"/>
<rect x="1734.04" y="1628.20" width="2.50" height="46.00" fill="#6355f5"/>
<text x="2375.71" y="1663.20" font-size="35.50" fill="#6355f5" textLength="113.48" lengthAdjust="spacingAndGlyphs">272 ms</text>
<text x="2561.58" y="1215.80" font-size="24.00" fill="#222" textLength="113.54" lengthAdjust="spacingAndGlyphs">198.18.0.1</text>
<rect x="2562.20" y="1226.30" width="614.40" height="63.30" fill="#ededed" rx="6"/>
<rect x="2562.20" y="1226.30" width="175.70" height="63.30" fill="#6355f5" rx="6"/>
<text x="3223.32" y="1269.30" font-size="34.00" fill="#6355f5" textLength="94.37" lengthAdjust="spacingAndGlyphs">28.3%</text>
</svg></body></html>
